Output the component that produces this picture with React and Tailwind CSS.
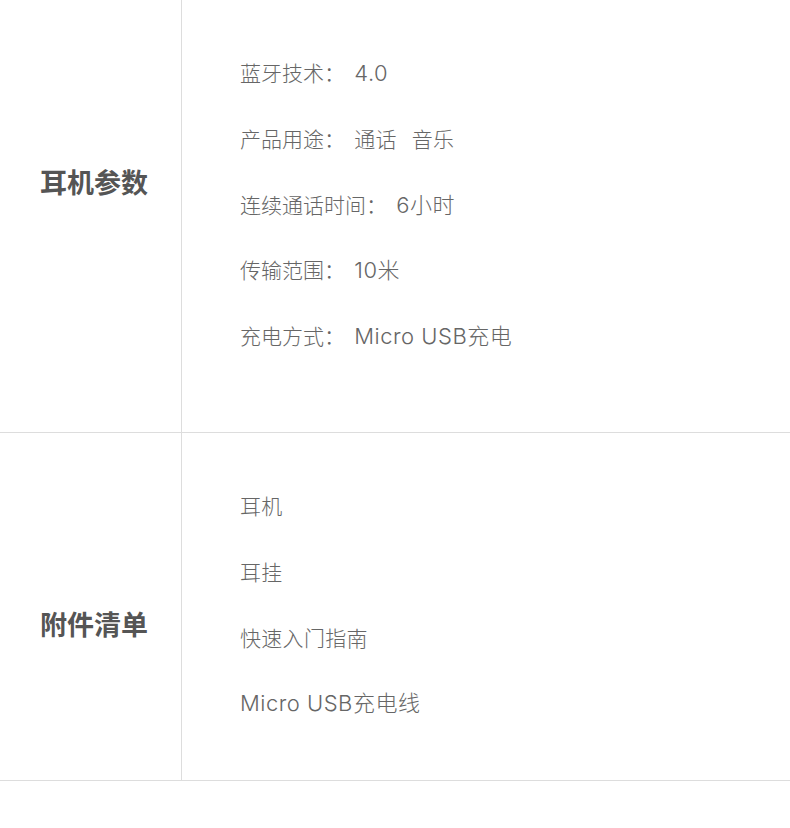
import React from 'react';

const sections = [
  {
    title: '耳机参数',
    height: 'h-[433px]',
    titlePad: 'pt-[162px]',
    items: [
      ['蓝牙技术：', '4.0'],
      ['产品用途：', '通话   音乐'],
      ['连续通话时间：', '6小时'],
      ['传输范围：', '10米'],
      ['充电方式：', 'Micro USB充电'],
    ],
  },
  {
    title: '附件清单',
    height: 'h-[348px]',
    titlePad: 'pt-[171px]',
    items: [['', '耳机'], ['', '耳挂'], ['', '快速入门指南'], ['', 'Micro USB充电线']],
  },
];

const hasLatin = (text) => /[A-Za-z0-9]/.test(text);

const App = () => {
  return (
    <div
      className="w-[790px] h-[828px] bg-white"
      style={{ fontFamily: '"Noto Sans CJK SC", "Noto Sans", sans-serif' }}
    >
      {sections.map((section) => (
        <div key={section.title} className={`flex border-b border-[#dddddd] ${section.height}`}>
          <div className={`w-[182px] shrink-0 border-r border-[#dddddd] pl-[40px] ${section.titlePad}`}>
            <h2 className="text-[27px] leading-[40px] font-bold text-[#555555]">{section.title}</h2>
          </div>
          <ul className="pl-[58px] pt-[40px]">
            {section.items.map(([label, value]) => (
              <li
                key={value}
                className="h-[65.75px] overflow-hidden text-[21px] leading-[65.75px] font-light text-[#666666] whitespace-pre"
              >
                {label && <span className="leading-none">{label}  </span>}
                {hasLatin(value) ? (
                  <span className="leading-none font-['Inter','Noto_Sans_CJK_SC',sans-serif] text-[22px] tracking-[0.5px]">
                    {value}
                  </span>
                ) : (
                  <span className="leading-none tracking-[0.3px]">{value}</span>
                )}
              </li>
            ))}
          </ul>
        </div>
      ))}
    </div>
  );
};

export default App;
